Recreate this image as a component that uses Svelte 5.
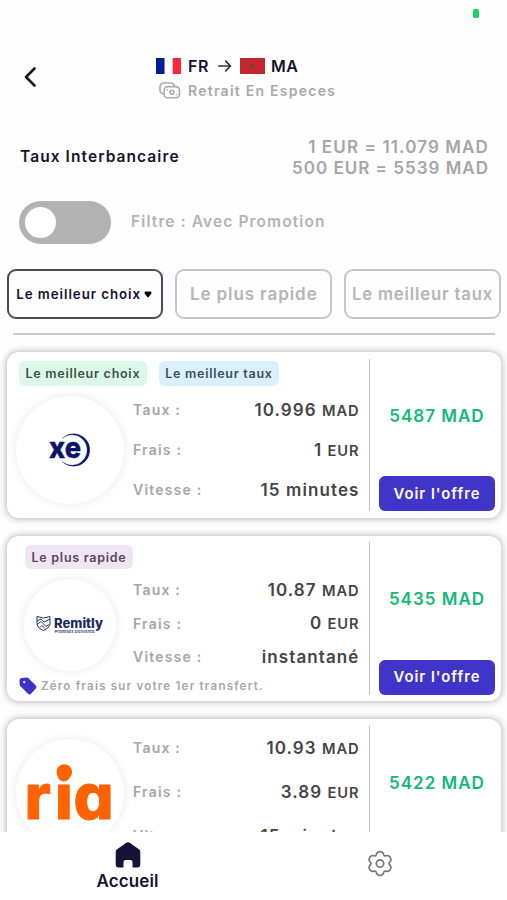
<script>
  const offers = [
    {
      id: 'xe',
      tags: [
        { label: 'Le meilleur choix', tone: 'green' },
        { label: 'Le meilleur taux', tone: 'blue' }
      ],
      rate: '10.996', fee: '1', speed: '15 minutes', total: '5487 MAD'
    },
    {
      id: 'remitly',
      tags: [{ label: 'Le plus rapide', tone: 'purple' }],
      rate: '10.87', fee: '0', speed: 'instantané', total: '5435 MAD',
      promo: 'Zéro frais sur votre 1er transfert.'
    },
    { id: 'ria', tags: [], rate: '10.93', fee: '3.89', speed: '15 minutes', total: '5422 MAD' }
  ];

  // Six-lobed outline of the settings gear, centred on 13,13.5
  const gear = 'M' + Array.from({ length: 120 }, (_, i) => {
    const a = (i / 120) * Math.PI * 2;
    const r = 10.7 + 1.45 * Math.cos(6 * a) - 0.3 * Math.cos(12 * a);
    return `${(13 + r * Math.sin(a)).toFixed(2)} ${(13.5 - r * Math.cos(a)).toFixed(2)}`;
  }).join('L') + 'z';
</script>

<div class="screen">
  <div class="status"><i></i></div>
  <header>
    <svg class="back" width="14" height="22" viewBox="0 0 14 22"><path d="M11.500 2.500 3 11l8.500 8.500" /></svg>
    <div class="route">
      <div class="countries">
        <svg width="25" height="16" viewBox="0 0 25 16"><path fill="#001f96" d="M0 0h8.500v16H0z" /><path fill="#f9283c" d="M16.700 0H25v16h-8.300z" /></svg>
        <span class="from">FR</span>
        <svg class="arrow" width="14" height="12" viewBox="0 0 14 12"><path d="M.8 6h11.700M7.700 1.200 12.500 6l-4.800 4.800" /></svg>
        <svg width="25" height="16" viewBox="0 0 25 16"><path fill="#c1272d" d="M0 0h25v16H0z" /><path d="m12.500 5.700 1.500 4.400-3.800-2.700h4.600L11 10.100z" fill="#6a4b27" stroke="#6a4b27" stroke-width=".8" /></svg>
        <span class="to">MA</span>
      </div>
      <div class="method">
        <svg width="22" height="17" viewBox="0 0 22 17"><path d="M5.200 11.800H4.600A3.600 3.600 0 0 1 1 8.200V4.600A3.600 3.600 0 0 1 4.600 1h7.300a3.600 3.600 0 0 1 3.600 3.600" /><rect x="5.200" y="4.600" width="15.300" height="11.200" rx="3.600" /><circle cx="12.900" cy="10.200" r="2" /><path d="M8.300 7.900h.1M17.300 12.500h.1" stroke-linecap="round" /></svg>
        <span>Retrait En Especes</span>
      </div>
    </div>
  </header>

  <section class="interbank">
    <h2>Taux Interbancaire</h2>
    <div class="values"><div class="one">1 EUR = 11.079 MAD</div><div class="many">500 EUR = 5539 MAD</div></div>
  </section>

  <section class="filter">
    <div class="toggle"><i></i></div>
    <span>Filtre : Avec Promotion</span>
  </section>

  <nav class="sorts">
    <button class="active"><span>Le meilleur choix</span><svg width="8" height="7" viewBox="0 0 8 7"><path d="M1.200.5h5.600Q8 1.200 7.300 2.500L4.700 6Q4 6.800 3.300 6L.7 2.500Q0 1.200 1.200.5z" /></svg></button>
    <button class="fast">Le plus rapide</button>
    <button class="best">Le meilleur taux</button>
  </nav>
  <div class="rule"></div>

  <main>
    {#each offers as offer (offer.id)}
      <article class={offer.id}>
        <div class="info">
          {#if offer.tags.length}
            <div class="tags">
              {#each offer.tags as tag}<span class={tag.tone}>{tag.label}</span>{/each}
            </div>
          {/if}
          <div class="details">
            <div class="logo">
              {#if offer.id === 'xe'}
                <svg width="42" height="34" viewBox="0 0 42 34">
                  <text x="0" y="25.200" textLength="32" lengthAdjust="spacingAndGlyphs" font-size="29.500" font-weight="800" fill="#0a146e" stroke="#0a146e" stroke-width=".4">xe</text>
                  <path d="M13 5.500A16.300 16.300 0 1 1 13 28.500 15.200 15.200 0 1 0 13 5.500z" fill="#0a146e" stroke="#0a146e" stroke-width=".3" />
                </svg>
              {:else if offer.id === 'remitly'}
                <svg width="68" height="20" viewBox="0 0 68 20">
                  <path d="M1 1.500 7.500 3 14 1.500v8.300q-1.500 4-6.500 5.800Q2.500 13.800 1 9.800zM1 6l4-2 3 3 6-3M1 9.500l4-3 5 5 3-2M4 12.500l2-2 3 3" fill="none" stroke="#253462" />
                  <text x="18" y="12.800" textLength="49" lengthAdjust="spacingAndGlyphs" font-size="13" font-weight="800" fill="#1b2a5c">Remitly</text>
                  <text x="18.500" y="18" textLength="40" lengthAdjust="spacingAndGlyphs" font-size="4" font-weight="600" fill="#33406c">Promises Delivered</text>
                </svg>
              {:else}
                <svg width="86" height="57" viewBox="0 0 86 57" fill="#ff6200">
                  <text y="54.500" font-size="63" font-weight="800" stroke="#ff6200" stroke-width=".8" stroke-linejoin="round"><tspan x="-2.500">r</tspan><tspan x="28">i</tspan><tspan class="single-a" x="46.500">a</tspan></text>
                  <circle cx="37.300" cy="8" r="7.800" />
                </svg>
              {/if}
            </div>
            <dl>
              <div><dt>Taux :</dt><dd>{offer.rate} <small>MAD</small></dd></div>
              <div><dt>Frais :</dt><dd>{offer.fee} <small>EUR</small></dd></div>
              <div><dt>Vitesse :</dt><dd class="speed">{offer.speed}</dd></div>
            </dl>
          </div>
          {#if offer.promo}
            <div class="promo">
              <svg width="18" height="18" viewBox="0 0 18 18"><path fill="#3f32c8" d="M2.500 1 7.500.5q1.200 0 2 .8l7.300 7.300q1.500 1.500 0 3L12 16.700q-1.500 1.400-3 0L1.500 9.300Q.6 8.400.6 7.200V3Q.6 1.300 2.500 1z" /><circle cx="5.200" cy="5.200" r="1.100" fill="#fff" /></svg>
              <span>{offer.promo}</span>
            </div>
          {/if}
        </div>
        <div class="offer">
          <strong>{offer.total}</strong>
          <button>Voir l'offre</button>
        </div>
      </article>
    {/each}
  </main>

  <footer>
    <div class="home">
      <svg width="26" height="26" viewBox="0 0 26 26"><path fill="#15133a" d="M11.200.8q1.800-1 3.600 0l8.700 6.200Q25.300 8.200 25.300 10v12.500q0 3-3 3H17.500v-5.500q0-2-2-2h-5q-2 0-2 2v5.500H3.700q-3 0-3-3V10Q.7 8.200 2.500 7z" /></svg>
      <span>Accueil</span>
    </div>
    <div class="settings">
      <svg width="26" height="27" viewBox="0 0 26 27"><path d={gear} /><circle cx="13" cy="13.500" r="3.700" /></svg>
    </div>
  </footer>
</div>

<style>
  :global(body) { margin: 0; background: #fff; }
  .screen, button { font-family: Inter, "Liberation Sans", sans-serif; font-weight: 600; }
  .screen { width: 507px; height: 900px; display: flex; flex-direction: column; overflow: hidden; background: #fefefe; color: #15132f; }
  .screen * { box-sizing: border-box; }
  svg { display: block; flex: none; overflow: visible; }
  span, dt, dd, strong, h2, button { white-space: nowrap; }
  button { padding: 0; border: 0; background: none; }

  .status { height: 54px; flex: none; display: flex; justify-content: flex-end; padding: 9px 28px 0 0; }
  .status i { width: 6px; height: 9px; border-radius: 1.500px; background: #20d264; }

  header { height: 50px; flex: none; display: flex; padding-left: 23px; }
  .back { margin-top: 12px; fill: none; stroke: #15132f; stroke-width: 2.600; stroke-linecap: round; stroke-linejoin: round; }
  .route { margin-left: 119px; }
  .countries { display: flex; align-items: center; height: 24px; font-size: 16px; letter-spacing: .5px; }
  .from { width: 30px; margin-left: 7px; }
  .arrow { margin-right: 8px; fill: none; stroke: #35344a; stroke-width: 1.700; stroke-linecap: round; stroke-linejoin: round; }
  .to { margin-left: 6px; }
  .method { display: flex; align-items: center; height: 25px; margin-left: 3px; font-size: 14px; letter-spacing: 1.250px; color: #a9a9a9; }
  .method svg { margin-right: 7px; fill: none; stroke: #ababab; stroke-width: 1.600; }

  .interbank { height: 96px; flex: none; display: flex; justify-content: space-between; padding: 33px 18px 0 20px; }
  h2 { margin: 9px 0 0; font-size: 15.500px; line-height: 22px; letter-spacing: 1.080px; font-weight: 600; }
  .values { text-align: right; font-size: 17px; line-height: 21px; letter-spacing: 1px; color: #a6a6a6; }
  .one { letter-spacing: 1.120px; }

  .filter { height: 44px; flex: none; display: flex; align-items: center; padding-left: 19px; color: #b3b3b3; font-size: 15.500px; letter-spacing: 1.120px; }
  .filter span { padding-bottom: 2px; }
  .toggle { width: 92px; height: 43px; margin-right: 20px; padding: 6px; border-radius: 22px; background: #b3b3b3; }
  .toggle i { display: block; width: 31px; height: 31px; border-radius: 50%; background: #fff; }

  .sorts { display: flex; gap: 12px; flex: none; padding: 25px 6px 0 7px; }
  .sorts button { width: 157px; height: 50px; border: 2px solid #c7c7c7; border-radius: 9px; color: #b5b5b5; font-size: 17px; letter-spacing: .9px; }
  .sorts .best { font-size: 16.700px; letter-spacing: .85px; }
  .sorts .active { display: flex; align-items: center; justify-content: center; gap: 3px; width: 156.500px; padding-right: 2px; border: 2.500px solid #4c495f; color: #15132f; font-size: 13.300px; letter-spacing: .95px; }
  .rule { height: 2px; flex: none; margin: 14px 12px 0 13px; background: #cbcbcb; }

  main { flex: 1; min-height: 0; overflow: hidden; display: flex; flex-direction: column; gap: 18px; padding: 17px 6px 0 7px; }
  article { height: 165.500px; flex: none; display: flex; padding: 6.500px 0; border-radius: 12px; background: #fff; box-shadow: 0 0 7px 1px rgba(0, 0, 0, .28); }
  .info { width: 363px; border-right: 1.500px solid #c2c2c2; }
  .tags { display: flex; gap: 12px; padding: 2.500px 0 0 12px; }
  .tags span { height: 24.500px; padding: 0 6.500px; border-radius: 6px; font-size: 12.500px; line-height: 25px; letter-spacing: .740px; color: #3d514a; }
  .tags .green { background: #dcf8e9; }
  .tags .blue { background: #daf1fc; color: #37505e; }
  .tags .purple { background: #f1e4f4; color: #534a55; }
  .details { display: flex; align-items: flex-start; }
  .logo { width: 108px; height: 108px; margin: 10px 0 0 9px; display: grid; place-items: center; border-radius: 50%; background: #fff; box-shadow: 0 0 10px rgba(0, 0, 0, .09); }
  .single-a { font-feature-settings: "cv11"; }
  dl { width: 226.500px; margin: 4px 0 0 9px; }
  dl div { height: 40px; display: flex; align-items: center; justify-content: space-between; }
  dt { font-size: 14px; letter-spacing: 1.200px; color: #a6a6a6; }
  dd { margin: 0; font-size: 17px; letter-spacing: 1.050px; color: #454545; }
  .speed { letter-spacing: 1.100px; }
  small { font-size: 14.700px; letter-spacing: .9px; }
  .remitly .tags { padding-left: 18px; }
  .remitly .logo { width: 92px; height: 92px; margin: 9.500px 8px 0 17px; }
  .remitly dl { margin-top: 4px; }
  .remitly dl div { height: 33.500px; }
  .promo { display: flex; align-items: center; gap: 4px; height: 18px; margin: 3px 0 0 12px; font-size: 11.500px; letter-spacing: 1.230px; color: #a6a6a6; }
  .ria .logo { margin-top: 13px; }
  .ria dl { margin-top: 0; }
  .ria dl div { height: 44px; }

  .offer { flex: 1; display: flex; flex-direction: column; justify-content: space-between; align-items: center; padding-left: 3px; }
  .offer strong { margin-top: 44px; font-size: 17px; line-height: 26px; letter-spacing: 1px; font-weight: 600; color: #12b976; }
  .offer button { width: 116px; height: 35px; border-radius: 6px; background: #4134c9; color: #fff; font-size: 14.800px; letter-spacing: 1px; }

  footer { height: 68px; flex: none; display: flex; background: #fff; }
  .home { width: 255px; display: flex; flex-direction: column; align-items: center; padding-top: 10px; font-size: 17px; line-height: 26px; letter-spacing: .1px; color: #15132f; }
  .settings { flex: 1; padding: 18px 0 0 112px; }
  .settings svg { fill: none; stroke: #777; stroke-width: 1.700; }
</style>
